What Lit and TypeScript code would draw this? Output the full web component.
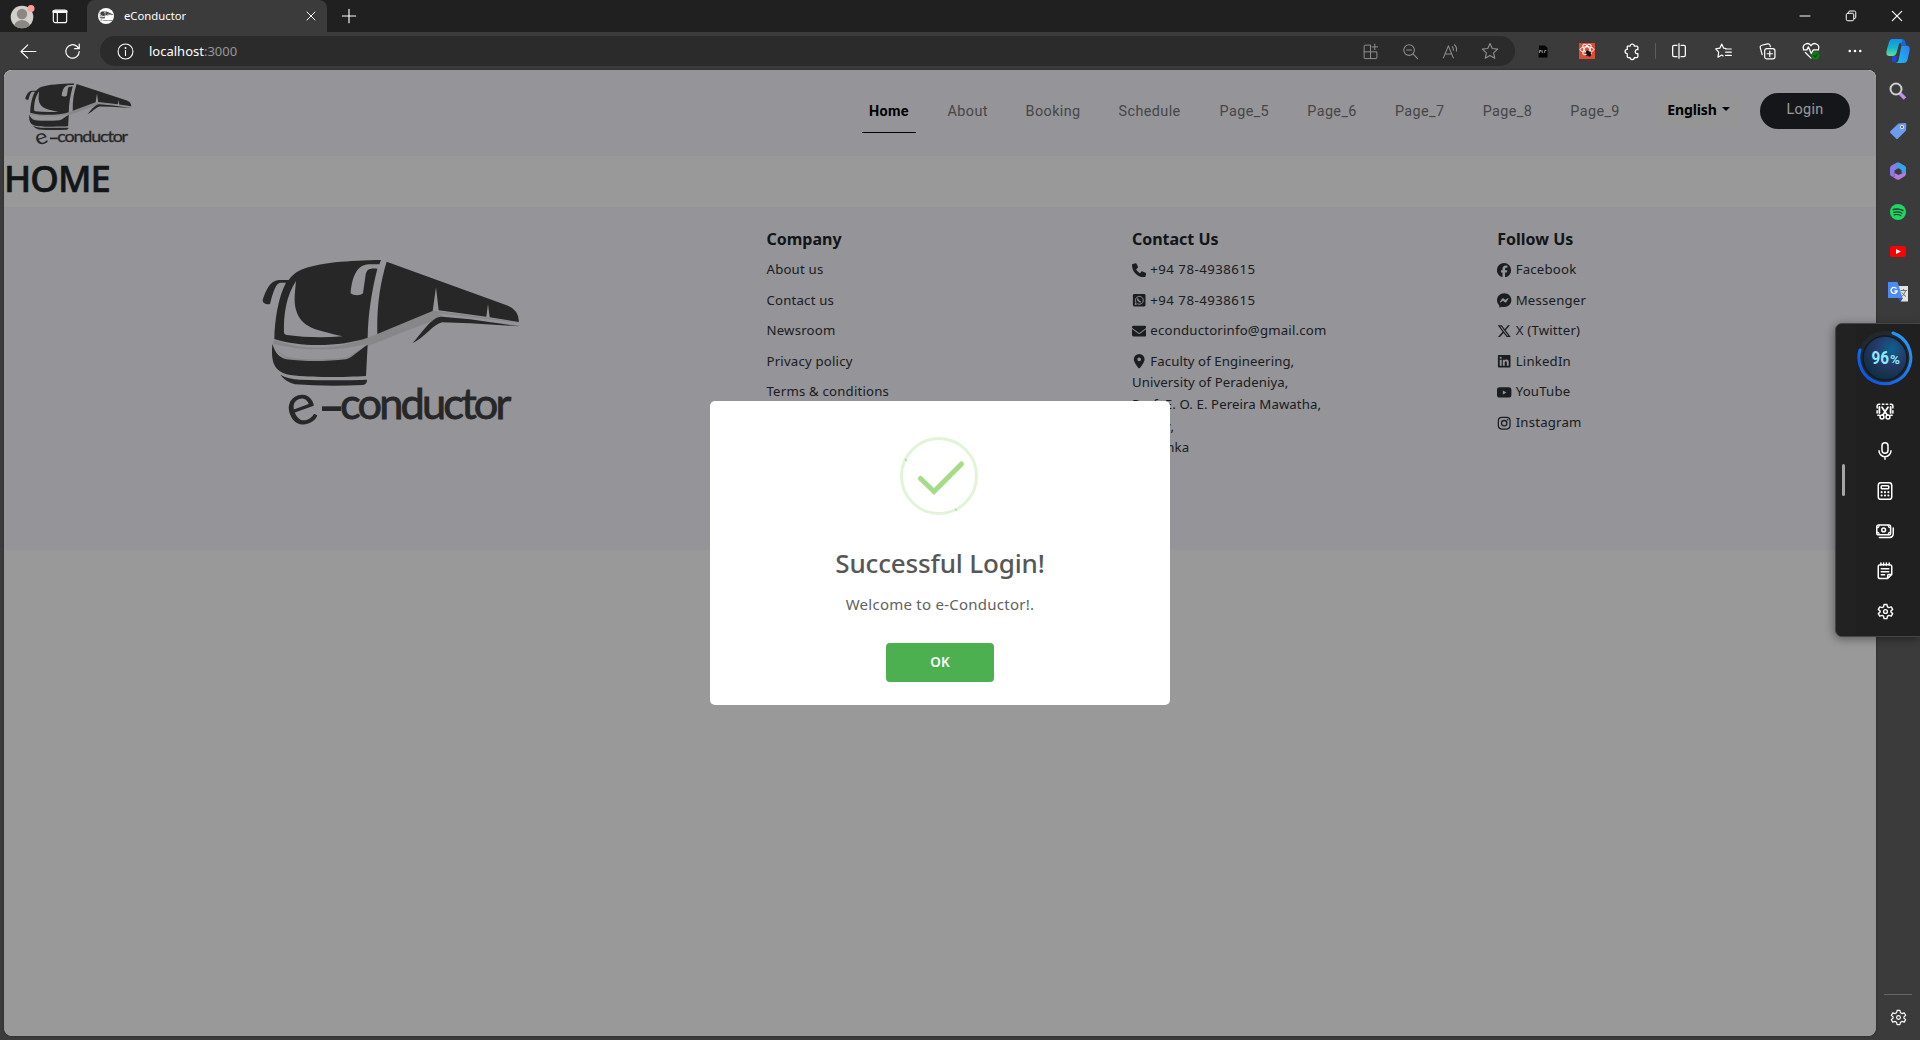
import { LitElement, html, svg, css } from "lit";
import { customElement, property } from "lit/decorators.js";

/* Every icon is a 24x24 drawing; strokes inherit the text colour. */
const icons: Record<string, unknown> = {
  workspaces: svg`<rect x="2" y="3" width="20" height="19" rx="3"/><path d="M2.500 5.500h19" stroke-width="4"/><path d="M8 8v13.500"/>`,
  close: svg`<path d="M4 4l16 16M20 4L4 20"/>`,
  plus: svg`<path d="M12 2v20M2 12h20"/>`,
  back: svg`<path d="M22.500 12H2M11 2.500L1.500 12l9.500 9.500"/>`,
  reload: svg`<path d="M21.500 12a9.500 9.500 0 1 1-3-7l2.500 2.500M21.500 1.500v6.500h-6.500"/>`,
  info: svg`<circle cx="12" cy="12" r="10.500"/><path d="M12 10.500v7"/><circle cx="12" cy="7" r=".6" fill="currentColor"/>`,
  minimize: svg`<path d="M2 12h20"/>`,
  restore: svg`<rect x="2.500" y="6.500" width="15" height="15" rx="3"/><path d="M7 6V5a3 3 0 0 1 3-3h8.500a3 3 0 0 1 3 3v9.500a3 3 0 0 1-3 3"/>`,
  apps: svg`<path d="M11 3H4.500A1.500 1.500 0 0 0 3 4.500V21a1 1 0 0 0 1 1h16a1 1 0 0 0 1-1v-8.500H3M12 3v19M18 1.500v8M14 5.500h8"/>`,
  zoomout: svg`<circle cx="10" cy="10" r="7.500"/><path d="M6.500 10h7M15.500 15.500l6.500 6.500"/>`,
  read: svg`<path d="M2 21L9 4l7 17M4.500 15.500h9M14.500 5q2 2 1.500 5.500M17.500 2.500q4 3.500 2.800 9"/>`,
  star: svg`<path d="M12 2l3 6.700 7.200.8-5.400 4.900 1.500 7.200L12 18l-6.300 3.600 1.500-7.200L1.800 9.500 9 8.700z"/>`,
  puzzle: svg`<path d="M6.500 4.500H10a3 3 0 0 1 6 0h3.500A1.500 1.500 0 0 1 21 6v3.500h-1.500a2.800 2.800 0 0 0 0 5.500H21v4a1.500 1.500 0 0 1-1.500 1.500H16a3 3 0 0 1-6 0H7.500A1.500 1.500 0 0 1 6 19v-4a3 3 0 0 1 0-6V5z"/>`,
  split: svg`<path d="M9 3.500H4.500a2 2 0 0 0-2 2v13a2 2 0 0 0 2 2H9M15 3.500h4.500a2 2 0 0 1 2 2v13a2 2 0 0 1-2 2H15M12 1v22"/>`,
  favlist: svg`<path d="M15.500 7.800l-3.300-.5L9.500 1.500 6.800 7.300 1 8.200l4.200 4.600-1 7.200 5.300-3 2 1.200M15 8.500h8M15 13h8M15 17.500h8"/>`,
  collections: svg`<rect x="8" y="8" width="14.500" height="14.500" rx="3"/><path d="M15.200 11.500v7.500M11.500 15.200H19M4.500 16.500L1.800 6.800A3 3 0 0 1 4 3.200L12 1.300a3 3 0 0 1 3.600 2L16 5"/>`,
  health: svg`<path d="M2 9.500a5.500 5.500 0 0 1 10-4.500 5.500 5.500 0 0 1 10 4.500M2 10.500h4.500l2-4 4 9 2.500-5h7M4.500 14L12 21.500"/><circle cx="18" cy="18" r="5.500" fill="#107c10" stroke="none"/><path d="M15.500 18l2 2 3-3.500" stroke="#0b4f0b"/>`,
  dots: svg`<g fill="currentColor" stroke="none"><circle cx="3" cy="12" r="2.200"/><circle cx="12" cy="12" r="2.200"/><circle cx="21" cy="12" r="2.200"/></g>`,
  gear: svg`<path d="M10 2h4l.8 3.400 2 1.100 3.300-1 2 3.500-2.500 2.300v1.400l2.500 2.300-2 3.500-3.300-1-2 1.100L14 22h-4l-.8-3.400-2-1.100-3.300 1-2-3.500 2.500-2.300v-1.400L1.900 9l2-3.500 3.300 1 2-1.100z"/><circle cx="12" cy="12" r="2.700"/>`,
  snip: svg`<path d="M1.500 8V5.500A2.500 2.500 0 0 1 4 3h1M8.500 3h2M13.500 3h2M19 3h1a2.500 2.500 0 0 1 2.500 2.500V8M1.500 11.500v3M22.500 11.500v3M2.500 17.500h2M19.500 17.500h2"/><path d="M4.500 6.500v8M19.500 6.500v8M8 7l7 10.500M16 7L9 17.500" stroke-width="2.400"/><circle cx="8" cy="20" r="2.600"/><circle cx="16" cy="20" r="2.600"/>`,
  mic: svg`<rect x="8" y="1" width="8" height="14" rx="4"/><path d="M4 11.500a8 8 0 0 0 16 0M12 19.500V23"/>`,
  calc: svg`<rect x="3" y="1" width="18" height="22" rx="3.500"/><rect x="7" y="5" width="10" height="4" rx="1"/><g fill="currentColor" stroke="none"><circle cx="7.500" cy="13.500" r="1.400"/><circle cx="12" cy="13.500" r="1.400"/><circle cx="16.500" cy="13.500" r="1.400"/><circle cx="7.500" cy="18" r="1.400"/><circle cx="12" cy="18" r="1.400"/><circle cx="16.500" cy="18" r="1.400"/></g>`,
  money: svg`<rect x="1" y="4" width="18.500" height="13" rx="2.500"/><circle cx="10.200" cy="10.500" r="2.500"/><path d="M4.500 20.500h14a4.500 4.500 0 0 0 4.500-4.500V8"/><path d="M1.500 7.500Q4 7.500 4.500 4.500M19 7.500Q16.500 7.500 16 4.500M1.500 13.500Q4 13.500 4.500 16.500M19 13.500Q16.500 13.500 16 16.500" stroke-width="1.500"/>`,
  note: svg`<path d="M21 16.500V6a2.500 2.500 0 0 0-2.500-2.500h-13A2.500 2.500 0 0 0 3 6v13.500A2.500 2.500 0 0 0 5.500 22h10zM21 16.500h-4a1.500 1.500 0 0 0-1.500 1.500v4M7 9h10M7 13h10M7 17h4.500M6.500 1.200v3M10.200 1.200v3M13.900 1.200v3M17.600 1.200v3"/>`,
};

/* Solid 16x16 marks for the contact and social links. */
const marks: Record<string, unknown> = {
  phone: svg`<path d="M3.700.3L1 1.100C.4 1.200 0 1.700 0 2.300 0 9.900 6.100 16 13.700 16c.6 0 1.100-.4 1.200-1l.9-2.700c.2-.6-.1-1.200-.7-1.500l-3.400-1.400c-.5-.2-1.100-.1-1.400.4l-1.300 1.600C7 10.200 5.600 8.700 4.600 6.900l1.600-1.300c.4-.4.6-.9.4-1.500L5.200 1C4.900.4 4.300.1 3.700.3z"/>`,
  whatsapp: svg`<rect x="1" y="1" width="14" height="14" rx="1.600"/><g fill="none" stroke="#f8f7ff"><path d="M3.500 12.800l.8-2.600a4.400 4.400 0 1 1 1.800 1.800z" stroke-width="1"/><path d="M6.400 6c-.5 1.600 1.600 3.900 3.500 3.900" stroke-width="1.500"/></g>`,
  mail: svg`<path d="M1.500 2h13A1.500 1.500 0 0 1 15.400 4.700L8.600 9.800a1 1 0 0 1-1.200 0L.6 4.700A1.500 1.500 0 0 1 1.500 2zM0 5.500v6.500a2 2 0 0 0 2 2h12a2 2 0 0 0 2-2V5.500l-6.800 5.100a2 2 0 0 1-2.400 0z"/>`,
  pin: svg`<path fill-rule="evenodd" d="M8 0a6 6 0 0 0-6 6c0 2.700 3.600 7.500 5.200 9.500.4.500 1.200.5 1.600 0C10.400 13.500 14 8.700 14 6a6 6 0 0 0-6-6zm0 4a2 2 0 1 1 0 4 2 2 0 0 1 0-4z"/>`,
  facebook: svg`<path fill-rule="evenodd" d="M8 0a8 8 0 0 0-1.900 15.800v-5.300H4.400V8h1.700V6.900c0-2.700 1.200-4 3.900-4l1.600.2v2.200l-.9-.1c-1.300 0-1.800.5-1.800 1.800V8h2.600l-.5 2.500H8.900v5.400A8 8 0 0 0 8 0z"/>`,
  messenger: svg`<path fill-rule="evenodd" d="M8 .2C3.500.2 0 3.500 0 8c0 2.300 1 4.300 2.500 5.700l.1 2c.1.300.4.400.7.300l1.900-.8c.9.300 1.800.4 2.800.4 4.500 0 8-3.200 8-7.700S12.500.2 8 .2zM3.200 10.100l2.300-3.700a1.200 1.200 0 0 1 1.800-.3l1.800 1.400a.5.500 0 0 0 .6 0l2.500-1.900c.4-.2.800.2.600.6l-2.300 3.700a1.200 1.200 0 0 1-1.800.3L6.900 8.800a.5.500 0 0 0-.6 0l-2.500 1.900c-.4.200-.8-.2-.6-.6z"/>`,
  x: svg`<path fill-rule="evenodd" d="M12.200 1.500h2.200L9.600 7l5.700 7.500h-4.500L7.300 9.900l-4 4.600H1.100l5.100-5.900L.8 1.500h4.600l3.200 4.200zm-.8 11.700h1.200L4.700 2.800H3.400z"/>`,
  linkedin: svg`<path fill-rule="evenodd" d="M2 1h12a1 1 0 0 1 1 1v12a1 1 0 0 1-1 1H2a1 1 0 0 1-1-1V2a1 1 0 0 1 1-1zm1.100 5.300v6.700h2.100V6.300zm1-3.300a1.200 1.200 0 1 0 0 2.400 1.200 1.200 0 0 0 0-2.400zm2.400 3.300v6.700h2.100V9.700c0-.9.200-1.700 1.200-1.700s1.100 1 1.100 1.800V13H13V9.300c0-1.800-.4-3.200-2.500-3.200-1 0-1.700.6-2 1.100v-.9z"/>`,
  youtube: svg`<path fill-rule="evenodd" d="M3 2.500h10c2 0 3 .8 3 3v5.500c0 2.200-1 3-3 3H3c-2 0-3-.8-3-3V5.500c0-2.200 1-3 3-3zm3.500 3.500v4.500L10.500 8.200z"/>`,
  instagram: svg`<g fill="none" stroke="currentColor" stroke-width="1.400"><rect x="1.500" y="1.500" width="13" height="13" rx="3.800"/><circle cx="8" cy="8" r="3"/></g><circle cx="11.800" cy="4.200" r=".9"/>`,
};

@customElement("line-icon")
class LineIcon extends LitElement {
  @property() name = "";
  @property({ type: Number }) size = 16;
  @property({ type: Number }) weight = 1.5;
  static styles = css`
    :host { display: inline-flex; }
    svg { display: block; fill: none; stroke: currentColor; stroke-linecap: round; stroke-linejoin: round; overflow: visible; }
  `;
  render() {
    return html`<svg viewBox="0 0 24 24" width=${this.size} height=${this.size} stroke-width=${this.weight}>${icons[this.name]}</svg>`;
  }
}

@customElement("brand-logo")
class BrandLogo extends LitElement {
  static styles = css`
    :host { display: block; }
    svg { display: block; width: 100%; height: 100%; }
    .ink { fill: #414141; }
    .soft { fill: #e0dfe5; }
    .gap { fill: #f8f7ff; }
    text { font-family: Lato, sans-serif; fill: #414141; }
  `;
  render() {
    return html`<svg viewBox="0 0 900 600" preserveAspectRatio="none">
      <path class="soft" d="M104 300Q240 350 385 292L412 282 582 212 836 246 838 258 600 236Q500 270 440 296L384 318Q330 352 310 358 200 370 140 356 112 340 98 308Z" opacity=".95"/>
      <path class="gap" d="M100 312Q240 345 384 312Q330 350 310 354 200 364 140 350 112 338 100 312ZM595 220L836 248 838 256 612 230Z"/>
      <path class="ink" d="M423 60C330 61 230 68 182 90 165 98 155 108 146 120L116 120C90 122 78 150 68 180 68 192 82 194 90 192 96 170 104 132 120 128L138 128C115 170 104 240 103 297 190 325 310 318 383 293 384 220 396 150 412 86 385 84 380 90 377 104L369 160C362 168 340 168 332 160 334 136 340 76 385 73L418 73Z"/>
      <path class="gap" d="M168 123C140 165 130 220 132 280Q134 284 140 285 220 296 308 289C230 270 185 265 168 210 160 180 166 150 168 123Z"/>
      <path class="ink" d="M440 65L800 196Q836 208 837 246L749 232 744 192 739 230 596 211 588 142 578 213 412 282C410 200 420 130 440 65Z"/>
      <path class="ink" d="M517 310C545 280 575 230 604 230L690 238 840 259 690 250 606 247C580 252 555 292 517 310Z"/>
      <path class="ink" d="M97 312C106 338 116 352 140 358 200 366 260 364 318 358 340 350 360 328 383 314L378 408C310 412 190 414 140 403 105 392 92 370 97 312Z"/>
      <path class="ink" d="M121 404Q145 418 180 419 290 422 381 419 382 432 368 435 260 440 165 433 135 424 121 404Z"/>
      <text x="141" y="552" font-size="172" transform="rotate(-20 190 510)">e</text>
      <rect x="246" y="499" width="57" height="14" fill="#414141"/>
      <text x="300" y="538" font-size="130" textLength="514" lengthAdjust="spacing" stroke="#414141" stroke-width="2.500">conductor</text>
    </svg>`;
  }
}

@customElement("app-root")
class AppRoot extends LitElement {
  static styles = css`
    :host {
      display: block; position: relative; width: 1920px; height: 1040px; overflow: hidden;
      background: #3b3b3b; color: #fff;
      font-family: "Noto Sans", "Open Sans", sans-serif;
    }
    * { box-sizing: border-box; }
    .window { display: flex; flex-direction: column; height: 1040px; }

    .titlebar { display: flex; height: 32px; background: #202020; }
    .identity { display: flex; align-items: center; width: 87px; padding-left: 10px; gap: 17px; }
    .avatar { width: 25px; height: 25px; }
    .tab { display: flex; align-items: center; width: 240px; padding: 0 10px 0 11px; background: #3b3b3b; border-radius: 8px 8px 0 0; font-size: 11.3px; }
    .favicon { width: 16px; height: 16px; border-radius: 50%; background: #fff; display: flex; align-items: center; margin-right: 10px; }
    .favicon brand-logo { width: 16px; height: 12px; }
    .tab-title { flex: 1; line-height: 16px; }
    .newtab { display: flex; align-items: center; padding-left: 14px; }
    .controls { display: flex; margin-left: auto; }
    .controls span { width: 46px; display: flex; align-items: center; justify-content: center; }

    .toolbar { display: flex; height: 38px; align-items: center; }
    .nav-btn { display: flex; justify-content: center; width: 44px; }
    .nav-btn.first { margin-left: 6px; }
    .address { display: flex; align-items: center; height: 30px; width: 1415px; margin-left: 6px; padding: 0 5px 0 17px; border-radius: 15px; background: #2b2b2b; }
    .url { flex: 1; margin-left: 15px; font-size: 13px; line-height: 18px; }
    .url i { font-style: normal; color: #979797; }
    .address .slot { width: 40px; display: flex; justify-content: center; color: #8f8f8f; }
    .tools { display: flex; align-items: center; margin-left: 6px; }
    .tools .slot { width: 44px; height: 22px; display: flex; align-items: center; justify-content: center; }
    .tools .rule { width: 4px; display: flex; justify-content: center; }
    .tools .rule::before { content: ""; width: 1px; height: 16px; background: #5c5c5c; }
    .copilot { margin-left: 8px; }

    .body { display: flex; flex: 1; padding: 0 0 4px 4px; }
    .page { position: relative; width: 1872px; height: 966px; background: #fff; border-radius: 8px; overflow: hidden; color: #212529; box-shadow: 0 0 2px #222; }
    .site-header { display: flex; height: 86px; background: #f8f7ff; align-items: flex-start; padding-right: 26px; }
    .site-header brand-logo { width: 124px; height: 74px; margin: 6px 0 0 11.700px; }
    .menu { display: grid; grid-template-columns: 79px 78px 93px 101px repeat(5, 87.700px); margin: 25px 0 0 auto; font: 14.400px/33px Roboto, sans-serif; letter-spacing: .4px; color: #757575; }
    .menu span { justify-self: start; padding: 0 7px; height: 38px; }
    .menu .on { color: #000; font-weight: 700; border-bottom: 1px solid #000; padding: 0 7.500px; letter-spacing: .35px; }
    .lang { display: flex; align-items: center; justify-content: center; gap: 5px; width: 80px; height: 33px; margin: 23px 20px 0 9px; background: #f8f8f8; color: #000; font-weight: 700; font-size: 14px; letter-spacing: -.1px; padding: 0 3px 1px 0; }
    .lang::after { content: ""; border: 4px solid transparent; border-top-color: #000; border-bottom: 0; }
    .login { width: 90px; height: 36px; margin-top: 23px; border-radius: 18px; background: #23252b; color: #fff; font: 14.400px/34px Roboto, sans-serif; letter-spacing: .3px; text-align: center; }
    h1 { margin: 0; height: 51px; font-size: 36.500px; line-height: 45px; font-weight: 500; letter-spacing: -1px; -webkit-text-stroke: .6px #212529; }
    .site-footer { display: grid; grid-template-columns: 762.500px 365.400px 365.400px 1fr; height: 343px; background: #f8f7ff; }
    .site-footer brand-logo { width: 300px; height: 200px; margin: 33px 0 0 236px; }
    .col { padding-top: 21px; font-size: 13.200px; color: #2e3236; }
    .col h2 { margin: 0 0 7.400px; font-size: 16px; line-height: 23.600px; font-weight: 700; color: #212529; }
    .col p { margin: 0 0 9px; line-height: 21.600px; white-space: nowrap; letter-spacing: .2px; }
    .col .phone, .col .whatsapp { letter-spacing: .5px; }
    .col .place { letter-spacing: .1px; }
    .col svg { width: 14.400px; height: 14.400px; fill: currentColor; vertical-align: -3px; margin-right: 4px; }

    .scrim { position: absolute; inset: 0; background: rgba(0, 0, 0, .4); display: flex; align-items: center; justify-content: center; }
    .modal { width: 460px; height: 304px; background: #fff; border-radius: 5px; display: flex; flex-direction: column; align-items: center; color: #575757; }
    .ok-mark { width: 78px; height: 78px; margin: 36px 2px 0 0; flex: none; }
    .modal h3 { margin: 29px 0 0; font-size: 26px; line-height: 38px; font-weight: 500; letter-spacing: -.15px; }
    .modal p { margin: 10px 0 0; font-size: 15px; line-height: 24px; letter-spacing: .25px; color: #616161; }
    .ok { width: 108px; height: 39px; margin-top: 27px; border-radius: 4px; background: #4caf50; color: #fff; font-weight: 600; font-size: 13.500px; line-height: 39px; text-align: center; }

    .sidebar { display: flex; flex-direction: column; align-items: center; flex: 1; padding-top: 1px; }
    .sidebar .slot { height: 40.200px; display: flex; align-items: center; }
    .sidebar .bottom { margin-top: auto; width: 28px; height: 42px; border-top: 1px solid #666; display: flex; justify-content: center; padding-top: 14px; }

    .dock { position: absolute; left: 1835px; top: 323px; width: 86px; height: 314px; display: flex; background: #202020; border: 1px solid #464646; border-radius: 7px 0 0 7px; box-shadow: -1px 2px 10px rgba(0, 0, 0, .4); }
    .grip { width: 19px; display: flex; align-items: center; padding-left: 6px; background: #222; border-radius: 7px 0 0 7px; }
    .grip::before { content: ""; width: 3px; height: 32px; border-radius: 2px; background: #a6a6a6; }
    .widgets { width: 60px; display: flex; flex-direction: column; align-items: center; padding-top: 6px; }
    .widgets .slot { height: 40px; display: flex; align-items: center; }
    .gauge { width: 56px; height: 56px; margin-bottom: 5px; }
    .gauge text { font-family: Roboto, sans-serif; font-weight: 700; fill: #8fe9ff; }
  `;

  private menu = ["Home", "About", "Booking", "Schedule", "Page_5", "Page_6", "Page_7", "Page_8", "Page_9"];
  private company = ["About us", "Contact us", "Newsroom", "Privacy policy", "Terms & conditions"];
  private contact = [["phone", "+94 78-4938615"], ["whatsapp", "+94 78-4938615"], ["mail", "econductorinfo@gmail.com"]];
  private social = [["facebook", "Facebook"], ["messenger", "Messenger"], ["x", "X (Twitter)"], ["linkedin", "LinkedIn"], ["youtube", "YouTube"], ["instagram", "Instagram"]];

  private mark(name: string) {
    return html`<svg viewBox="0 0 16 16">${marks[name]}</svg>`;
  }

  private icon(name: string, size = 16, weight = 1.5) {
    return html`<span class="slot"><line-icon name=${name} size=${size} weight=${weight}></line-icon></span>`;
  }

  private chrome() {
    return html`
      <div class="titlebar">
        <div class="identity">
          <svg class="avatar" viewBox="0 0 25 25">
            <defs><clipPath id="disc"><circle cx="12" cy="13" r="11.300"/></clipPath></defs>
            <circle cx="12" cy="13" r="11.300" fill="#d3d0cc"/>
            <g clip-path="url(#disc)" fill="#8b8783"><circle cx="12" cy="10" r="5.200"/><ellipse cx="12" cy="22.500" rx="8" ry="6.500"/></g>
            <circle cx="21" cy="4.500" r="3.500" fill="#ff9f9a"/>
          </svg>
          <line-icon name="workspaces" size="16" weight="1.700"></line-icon>
        </div>
        <div class="tab">
          <span class="favicon"><brand-logo></brand-logo></span>
          <span class="tab-title">eConductor</span>
          <line-icon name="close" size="12" weight="2"></line-icon>
        </div>
        <div class="newtab"><line-icon name="plus" size="16" weight="1.700"></line-icon></div>
        <div class="controls">
          <span><line-icon name="minimize" size="12" weight="2"></line-icon></span>
          <span><line-icon name="restore" size="12" weight="2"></line-icon></span>
          <span><line-icon name="close" size="14" weight="2"></line-icon></span>
        </div>
      </div>
      <div class="toolbar">
        <span class="nav-btn first"><line-icon name="back" size="17" weight="1.500"></line-icon></span>
        <span class="nav-btn"><line-icon name="reload" size="17" weight="1.700"></line-icon></span>
        <div class="address">
          <line-icon name="info" size="17" weight="1.500"></line-icon>
          <span class="url">localhost<i>:3000</i></span>
          ${this.icon("apps", 17, 1.4)}${this.icon("zoomout", 17, 1.5)}${this.icon("read", 17, 1.5)}${this.icon("star", 18, 1.5)}
        </div>
        <div class="tools">
          <span class="slot"><svg width="10" height="13" viewBox="0 0 10 13"><path d="M1 .5h6L9.500 3v9.500H.5z" fill="#050505"/><path d="M1.500 8V5.500h1.500V7M4.200 5.200v2.500h1M6.700 8V5.500h1.700" stroke="#aaa" stroke-width=".8" fill="none"/></svg></span>
          <span class="slot"><svg width="16" height="16" viewBox="0 0 16 16"><rect width="16" height="16" fill="#dd4b39"/><g fill="none" stroke="#fff" stroke-width="1"><ellipse cx="8" cy="6.500" rx="7" ry="2.700"/><ellipse cx="8" cy="6.500" rx="2.500" ry="6" transform="rotate(35 8 6.500)"/><ellipse cx="8" cy="6.500" rx="2.500" ry="6" transform="rotate(-35 8 6.500)"/></g><ellipse cx="9.500" cy="10.500" rx="2" ry="3.300" transform="rotate(-35 9.500 10.500)" fill="#171010"/><path d="M6 10l6.500-1M7 13l5-4M12 13L8 8" stroke="#171010" stroke-width=".8"/></svg></span>
          ${this.icon("puzzle", 17, 1.8)}
          <span class="rule"></span>
          ${this.icon("split", 16, 1.9)}${this.icon("favlist", 17, 1.7)}${this.icon("collections", 17, 1.7)}${this.icon("health", 18, 1.7)}${this.icon("dots", 14, 1)}
        </div>
        <svg class="copilot" width="26" height="24" viewBox="0 0 26 24">
          <defs>
            <linearGradient id="ca" x1="0" y1="0" x2="0" y2="1"><stop offset="0" stop-color="#178fe6"/><stop offset=".5" stop-color="#12b5d0"/><stop offset="1" stop-color="#69dc8b"/></linearGradient>
            <linearGradient id="cb" x1="0" y1="1" x2="1" y2="0"><stop offset="0" stop-color="#16c1f5"/><stop offset="1" stop-color="#2f7cf0"/></linearGradient>
          </defs>
          <path d="M13 0h4q2.500 0 3 2l1.200 4h-5z" fill="#1668d9"/>
          <path d="M7 17h5.500L11 22q-.5 2-2.500 1.500T7 20z" fill="#2342d6"/>
          <path d="M7 0h8q3 0 2 3.500h-1.500q-1 0-1.500 1.500l-2.500 9q-1 3-4 3H4.500q-4 0-3-5L4 3Q5 0 7 0z" fill="url(#ca)"/>
          <path d="M16.500 6.500H21q4.500 0 3.600 5l-2 9q-1 3.500-4 3.500h-8q2.500-.5 3-3z" fill="url(#cb)"/>
        </svg>
      </div>`;
  }

  private page() {
    return html`
      <div class="page">
        <header class="site-header">
          <brand-logo></brand-logo>
          <nav class="menu">${this.menu.map((m, i) => html`<span class=${i === 0 ? "on" : ""}>${m}</span>`)}</nav>
          <div class="lang">English</div>
          <div class="login">Login</div>
        </header>
        <h1>HOME</h1>
        <footer class="site-footer">
          <brand-logo></brand-logo>
          <div class="col"><h2>Company</h2>${this.company.map((c) => html`<p>${c}</p>`)}</div>
          <div class="col"><h2>Contact Us</h2>
            ${this.contact.map(([k, t]) => html`<p class=${k}>${this.mark(k)}${t}</p>`)}
            <p class="place">${this.mark("pin")}Faculty of Engineering,<br>University of Peradeniya,<br>Prof. E. O. E. Pereira Mawatha,<br>Kandy,<br>Sri Lanka</p>
          </div>
          <div class="col"><h2>Follow Us</h2>${this.social.map(([k, t]) => html`<p>${this.mark(k)}${t}</p>`)}</div>
        </footer>
        <div class="scrim">
          <div class="modal">
            <svg class="ok-mark" viewBox="0 0 78 78" fill="none">
              <circle cx="39" cy="39" r="37.500" stroke="#e2f4d8" stroke-width="3"/>
              <path d="M20.500 41.500L34 54.500 61.500 27" stroke="#a5dc86" stroke-width="5" stroke-linecap="round"/>
              <path d="M5 22l2 2M55 72l2 1.500" stroke="#a5dc86" stroke-width="1.200"/>
            </svg>
            <h3>Successful Login!</h3>
            <p>Welcome to e-Conductor!.</p>
            <div class="ok">OK</div>
          </div>
        </div>
      </div>`;
  }

  private sidebar() {
    return html`
      <aside class="sidebar">
        <span class="slot"><svg width="18" height="18" viewBox="0 0 18 18"><path d="M11 11.500l5 5" stroke="#c48cf0" stroke-width="3.500"/><circle cx="7" cy="7" r="5.500" fill="none" stroke="#cfcfcf" stroke-width="2"/></svg></span>
        <span class="slot"><svg width="18" height="18" viewBox="0 0 18 18"><path d="M9.500 1.500L16 1q1.500 0 1.300 1.500L17 8.500 9 16.500q-1 1-2 0L1.500 11q-1-1 0-2z" fill="#6c9cf0"/><circle cx="13" cy="5" r="2" fill="#e8eefb"/><circle cx="13" cy="5" r=".9" fill="#333"/></svg></span>
        <span class="slot"><svg width="18" height="18" viewBox="0 0 18 18"><path d="M8 .5L2.500 3.500Q1 4.500 1 6v6q0 1.500 1 2l3.500 1V8.500L9.500 6z" fill="#8a7be6"/><path d="M8 .5h2l6 3.500q1 .8 1 2v6l-4.500-1.500V8L7.500 5z" fill="#35a4ec"/><path d="M2 14l6 3.500q1.200.5 2.400 0l5.600-3.500q1-.8 1-2.500l-2-1L9.500 13 5.500 11v4z" fill="#b27bdc"/></svg></span>
        <span class="slot"><svg width="16" height="16" viewBox="0 0 16 16"><circle cx="8" cy="8" r="8" fill="#1ed760"/><g fill="none" stroke="#25382c" stroke-linecap="round"><path d="M3.300 5.500q5-1.500 9.500 1" stroke-width="1.600"/><path d="M3.700 8.300q4.200-1.300 8.200.9" stroke-width="1.300"/><path d="M4 10.900q3.800-1 7 .8" stroke-width="1.100"/></g></svg></span>
        <span class="slot"><svg width="16" height="11" viewBox="0 0 16 11"><rect width="16" height="11" rx="2.500" fill="#f00"/><path d="M6 3l5 2.500L6 8z" fill="#fff"/></svg></span>
        <span class="slot"><svg width="20" height="20" viewBox="0 0 20 20"><path d="M9 4h11v15.500h-7z" fill="#e3e3e3"/><path d="M10 16h5l-2.500 4z" fill="#3853a8"/><path d="M0 0h9.500l5 16H0z" fill="#4b8bf5"/><path d="M8.500 6.600A3 3 0 1 0 9 9H6.500" fill="none" stroke="#fff" stroke-width="1.400"/><path d="M12.500 8.500H19M15.500 7v1.500M17.500 9q-1 4-4.500 6M14 10.500q2 3 4 4" fill="none" stroke="#6d7478"/></svg></span>
        <div class="bottom"><line-icon name="gear" size="17" weight="1.600"></line-icon></div>
      </aside>`;
  }

  private dock() {
    return html`
      <div class="dock">
        <div class="grip"></div>
        <div class="widgets">
          <svg class="gauge" viewBox="0 0 56 56">
            <defs>
              <radialGradient id="orb" cx=".65" cy=".3" r=".8"><stop offset="0" stop-color="#0e6191"/><stop offset=".45" stop-color="#253a68"/><stop offset="1" stop-color="#0c2c3c"/></radialGradient>
              <linearGradient id="ring" x1="0" y1="1" x2="1" y2="0"><stop offset="0" stop-color="#0a4be0"/><stop offset="1" stop-color="#2aa0ff"/></linearGradient>
            </defs>
            <circle cx="28" cy="28" r="27" fill="#23282c"/>
            <circle cx="28" cy="28" r="22" fill="url(#orb)" stroke="#151a1f" stroke-width="1.500"/>
            <path d="M36 3A26 26 0 1 1 3 20" fill="none" stroke="url(#ring)" stroke-width="3" stroke-linecap="round"/>
            <text x="14.500" y="33.500" font-size="18" textLength="17.500" lengthAdjust="spacingAndGlyphs">96</text>
            <text x="33" y="33.500" font-size="13" textLength="10" lengthAdjust="spacingAndGlyphs">%</text>
          </svg>
          ${this.icon("snip", 18, 2)}${this.icon("mic", 18, 2)}${this.icon("calc", 18, 2)}${this.icon("money", 18, 2)}${this.icon("note", 18, 2)}${this.icon("gear", 17, 2)}
        </div>
      </div>`;
  }

  render() {
    return html`
      <div class="window">
        ${this.chrome()}
        <div class="body">${this.page()}${this.sidebar()}</div>
      </div>
      ${this.dock()}`;
  }
}
